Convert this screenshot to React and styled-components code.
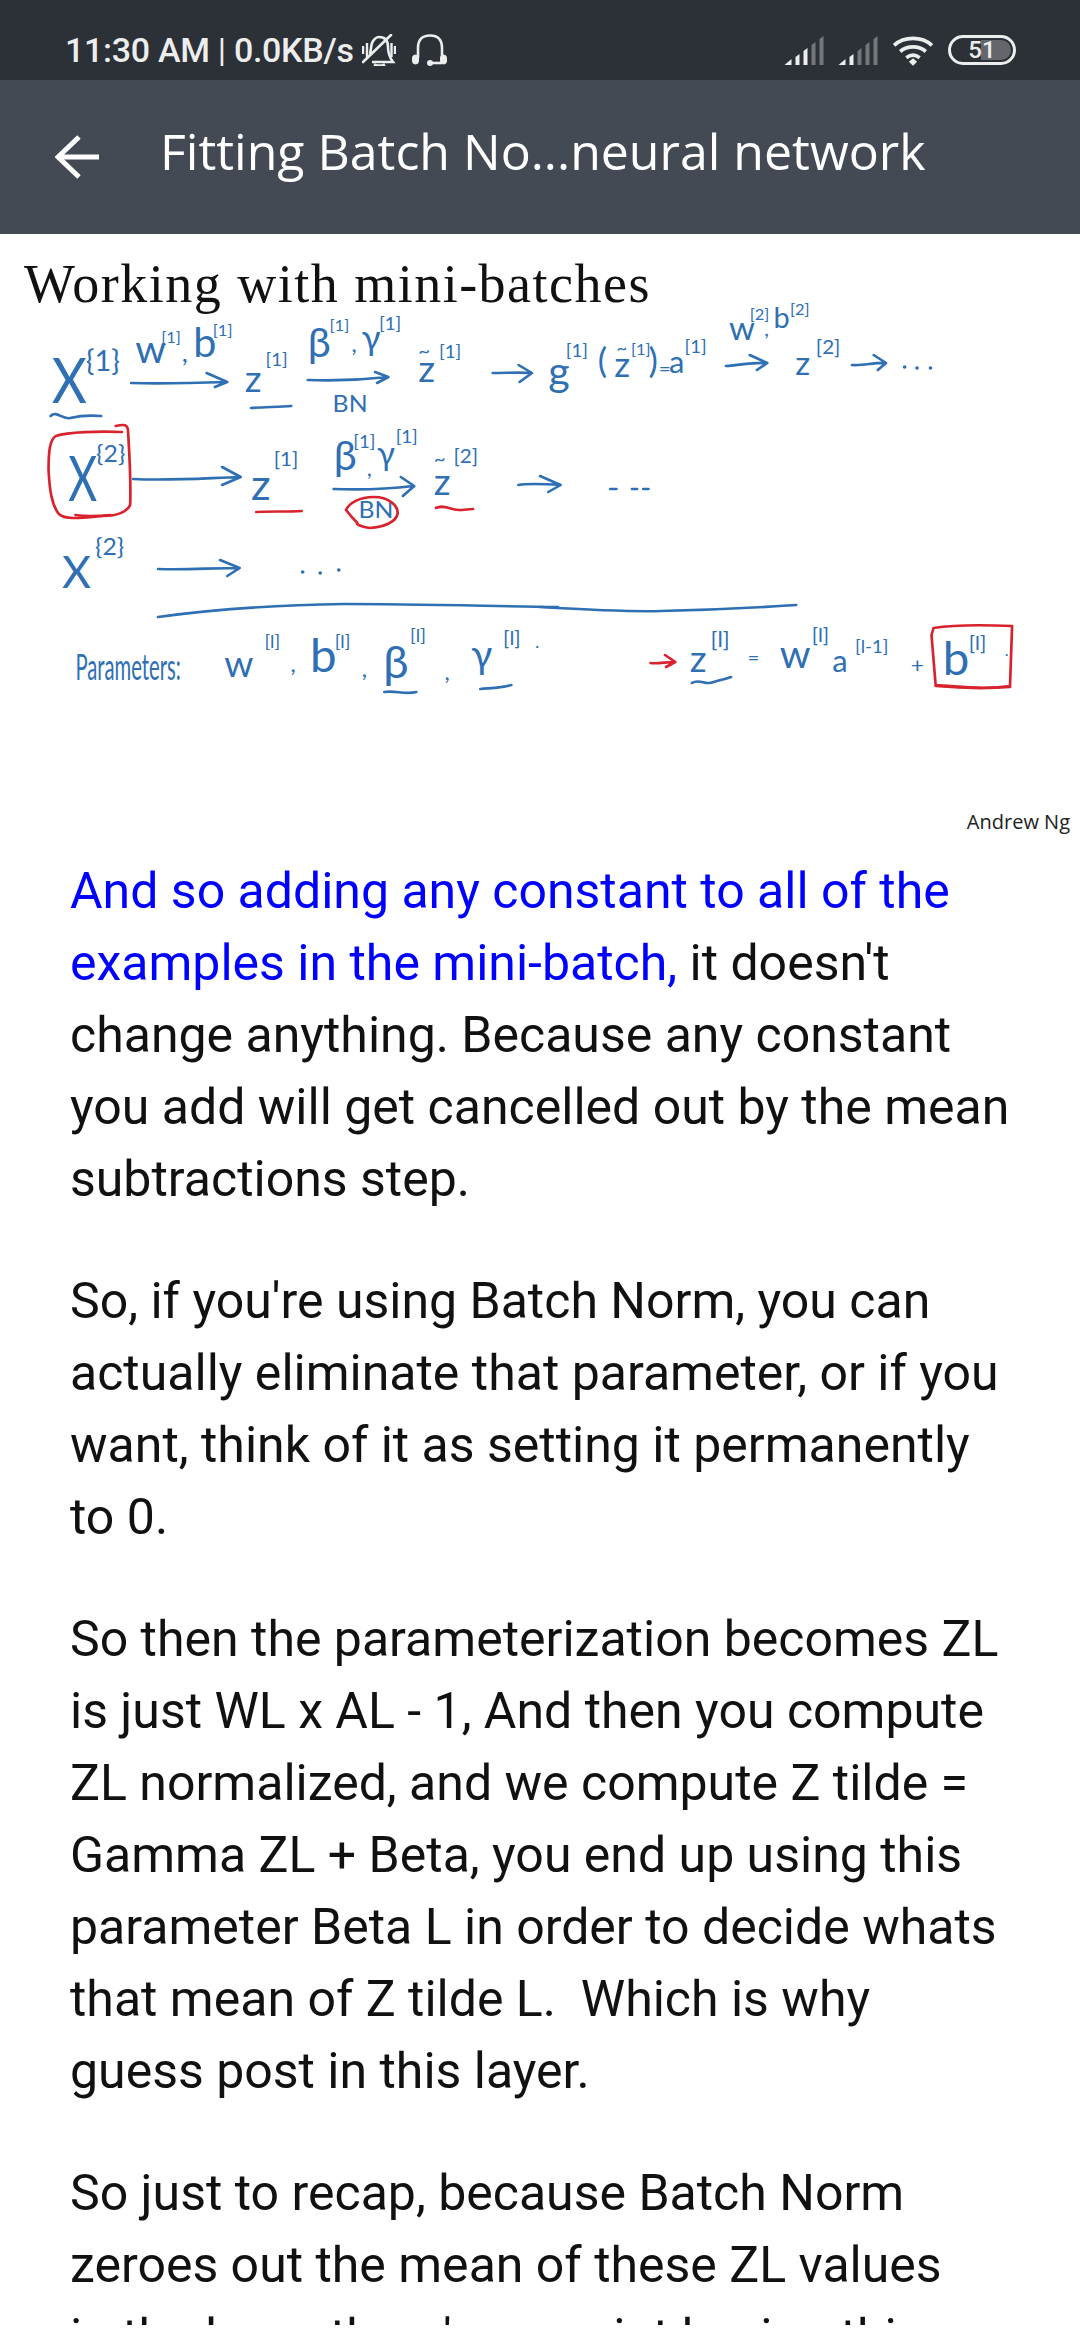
import React from 'react'
import styled, { createGlobalStyle } from 'styled-components'

const GlobalStyle = createGlobalStyle`
  html, body {
    margin: 0;
    padding: 0;
    height: 2340px;
    overflow: hidden;
    background: #fff;
  }
`

const BLUE = '#2f6fb3'
const RED = '#d8232f'
const SKETCH_SCALE_X = 1.033

// handwritten notes on the slide, one block per area of the board
// notes: [text, x, baseline y, size, squeezed width]
const boardAreas = [
  {
    origin: 0,
    notes: [
      ['X', 50, 403, 62, 34], ['{1}', 83, 371, 28], ['w', 131, 363, 38], ['[1]', 156, 343, 16], [',', 176, 362, 26],
      ['b', 187, 357, 40], ['[1]', 206, 336, 16], ['z', 237, 392, 36], ['[1]', 257, 366, 18], ['β', 298, 357, 40],
      ['[1]', 319, 331, 16], [',', 340, 352, 24], ['γ', 350, 350, 34], ['[1]', 367, 330, 18], ['BN', 322, 412, 24],
      ['z', 405, 382, 36], ['~', 405, 358, 20], ['[1]', 425, 358, 18],

      ['X', 66, 501, 62, 28], ['{2}', 93, 462, 24], ['z', 243, 500, 42], ['[1]', 265, 466, 20], ['β', 323, 470, 40],
      ['[1]', 342, 448, 18], [',', 355, 476, 22], ['γ', 365, 465, 32], ['[1]', 383, 443, 18], ['BN', 347, 518, 24],
      ['~', 420, 466, 20], ['z', 420, 495, 36], ['[2]', 439, 463, 20],

      ['X', 60, 588, 44, 28], ['{2}', 92, 555, 24],
      ['Parameters:', 73, 680, 36, 102], ['w', 217, 677, 36], ['[l]', 256, 648, 18], [',', 281, 672, 24],
      ['b', 300, 672, 46], ['[l]', 324, 648, 18], [',', 350, 677, 24], ['β', 371, 678, 44], ['[l]', 397, 642, 18],
      [',', 430, 680, 24], ['γ', 456, 668, 38], ['[l]', 487, 645, 20], ['.', 518, 648, 18],
    ],
    blue: [
      'M127 383 C160 384 190 383 220 382 M200 373 L220 382 L208 387',
      'M49 416 C55 410 60 420 68 418 C76 416 86 415 98 416',
      'M243 408 C255 407 270 407 282 406',
      'M298 380 C325 381 350 380 376 377 M363 372 L376 377 L365 383',
      'M477 373 C490 373 503 372 515 373 M502 365 L515 373 L503 382',
      'M129 479 C165 481 200 478 233 477 M215 467 L233 477 L215 485',
      'M323 489 C350 490 376 489 400 486 M388 477 L401 486 L390 496',
      'M153 569 C180 570 205 568 232 568 M213 560 L232 568 L220 576',
      'M153 617 C210 609 270 605 333 604 C400 604 470 606 540 607',
      'M372 692 C382 690 392 695 403 692',
      'M465 689 C475 688 485 688 495 685',
    ],
    red: [
      'M118 432 C95 431 66 432 54 436 C48 440 47 452 47 470 C48 490 50 505 57 514 C63 520 78 518 100 516 C113 516 123 512 126 505 C127 480 125 450 124 432 C124 424 120 424 112 426',
      'M73 515 C85 517 97 516 107 515',
      'M248 512 C262 511 278 512 292 511',
      'M335 510 C338 503 348 497 362 497 C376 497 385 505 385 513 C384 522 372 527 358 528 C350 527 344 524 346 523 C341 518 338 514 335 510',
      'M422 508 C430 504 436 510 444 510 C449 510 454 509 458 509',
    ],
    dots: [[293, 572], [310, 573], [328, 570]],
  },
  {
    origin: 540,
    notes: [
      ['g', 548, 386, 40], ['[1]', 565, 357, 18], ['(', 596, 373, 34], ['z', 612, 377, 34], ['~', 614, 354, 18],
      ['[1]', 628, 355, 16], [')', 645, 373, 34], ['=', 655, 376, 20], ['a', 665, 373, 30], ['[1]', 680, 353, 18],
      ['w', 723, 340, 32], ['[2]', 743, 320, 16], [',', 757, 336, 20], ['b', 766, 328, 28], ['[2]', 782, 315, 16],
      ['z', 787, 375, 32], ['[2]', 807, 354, 20],

      ['z', 685, 672, 36], ['[l]', 705, 647, 22], ['=', 741, 665, 20], ['w', 772, 668, 38], ['[l]', 803, 642, 20],
      ['a', 823, 672, 30], ['[l-1]', 845, 653, 18], ['+', 899, 673, 22], ['b', 930, 675, 46], ['[l]', 955, 650, 20],
      ['.', 990, 656, 16],
    ],
    blue: [
      'M720 366 C733 365 747 362 760 363 M743 355 L760 363 L750 370',
      'M842 365 C853 366 864 362 875 363 M863 355 L875 363 L867 370',
      'M519 485 C530 483 545 484 560 485 M540 476 L560 485 L548 492',
      'M608 489 H614 M629 489 H634 M640 489 H645',
      'M540 607 C590 610 625 612 657 611 C700 610 745 608 788 605',
      'M687 683 C695 678 700 686 708 682 C714 680 720 679 725 677',
    ],
    red: [
      'M647 663 C654 664 662 662 670 662 M661 655 L671 662 L662 667',
      'M921 628 C945 624 975 625 997 626 L995 686 C970 690 945 686 923 685 L919 635 L921 628',
      'M923 686 C945 688 970 689 995 687',
    ],
    dots: [[893, 367], [905, 368], [918, 368]],
  },
]

const Page = styled.div`
  width: 1080px;
  height: 2340px;
  background: #fff;
`

// the webview stops a little above the bottom edge of the screen
const Reader = styled.div`
  height: 2325px;
  overflow: hidden;
`

const StatusBar = styled.div`
  height: 80px;
  padding: 20px 64px 0 65px;
  box-sizing: border-box;
  display: flex;
  align-items: center;
  background: #2c3037;
  color: #eceded;
`

const Clock = styled.span`
  font: 500 34px Roboto, sans-serif;
  letter-spacing: -0.3px;
  white-space: nowrap;
`

const Thin = styled.span`
  font-weight: 400;
`

const StatusIcons = styled.div`
  display: flex;
  align-items: center;
  margin-left: 8px;
  gap: ${({ $gap }) => $gap || 16}px;
`

const Spacer = styled.div`
  flex: 1;
`

const Battery = styled.div`
  position: relative;
  width: 68px;
  height: 30px;
  box-sizing: border-box;
  border: 3px solid #eceded;
  border-radius: 15px;
  display: flex;
  align-items: center;
  justify-content: center;
  font: 500 24px Roboto, sans-serif;
  color: #eceded;
  overflow: hidden;
`

const BatteryFill = styled.div`
  position: absolute;
  top: 2px;
  bottom: 2px;
  right: 2px;
  width: 30px;
  border-radius: 0 11px 11px 0;
  background: #63666b;
`

const BatteryText = styled.span`
  position: relative;
`

const AppBar = styled.header`
  height: 154px;
  padding-left: 55px;
  box-sizing: border-box;
  display: flex;
  align-items: center;
  background: #444a54;
  color: #fff;
`

const Title = styled.h1`
  margin: 0 0 12px 61px;
  font: 400 50px "Open Sans", sans-serif;
  white-space: nowrap;
`

const Slide = styled.figure`
  margin: 0;
  padding-top: 22px;
  display: flex;
  flex-direction: column;
`

const SlideTitle = styled.div`
  padding-left: 24px;
  font: 400 54px/56px "Liberation Serif", serif;
  letter-spacing: 1.5px;
  color: #111;
  white-space: nowrap;
`

const Sketch = styled.svg`
  display: block;
  width: 1080px;
  height: 519px;
  margin-top: -22px;
  fill: none;
  stroke-linecap: round;
  stroke-linejoin: round;
`

const Ink = styled.path`
  stroke: ${({ $color }) => $color};
  stroke-width: 2.6;
  fill: none;
`

const Note = styled.text`
  font-family: Lato, "Open Sans", sans-serif;
  font-weight: 400;
  fill: ${BLUE};
  stroke: none;
`

const Credit = styled.figcaption`
  padding-right: 10px;
  text-align: right;
  font: 400 20px/26px "Open Sans", sans-serif;
  color: #222;
`

const Article = styled.article`
  padding: 20px 60px 0 70px;
`

const Paragraph = styled.p`
  margin: 0 0 50px;
  font: 400 50px/72px Roboto, sans-serif;
  color: #111;
`

const Highlight = styled.span`
  color: #0000ff;
`

const BellOff = () => (
  <svg width="34" height="32" viewBox="0 0 34 32" fill="none" stroke="#eceded" strokeWidth="2.6">
    <path d="M8 20 C9 16 9 12 10 9 C12 5 14 3 17 3 C24 3 26 8 26 13 C26 20 28 24 31 28 H10" />
    <path d="M12 30.5 C15 32 20 32 23 30.5" strokeWidth="3" />
    <path d="M1 28 L29 1" strokeLinecap="round" />
    <path d="M1 12 V20 M5 9 V23 M29.5 9 V23 M33 12 V20" strokeWidth="2.4" />
  </svg>
)

const Headset = () => (
  <svg width="35" height="32" viewBox="0 0 35 32" fill="none" stroke="#eceded" strokeWidth="2.6">
    <path d="M6 24 V14 C6 6 10 1.5 18 1.5 C26 1.5 30 6 30 14 V24" />
    <rect x="0.5" y="21" width="6" height="9" rx="3" fill="#eceded" strokeWidth="1" />
    <rect x="28.5" y="21" width="6" height="9" rx="3" fill="#eceded" strokeWidth="1" />
    <path d="M18 29 H30" />
    <circle cx="18" cy="29" r="3" fill="#eceded" stroke="none" />
  </svg>
)

const Signal = ({ active }) => (
  <svg width="40" height="30" viewBox="0 0 39 30">
    {[0, 1, 2, 3, 4].map((i) => (
      <path
        key={i}
        d={i === 0 ? 'M0 30 L7 24 V30 Z' : `M${i * 8 + 3} 30 V${22 - (i - 1) * 6} L${i * 8 + 7} ${19 - (i - 1) * 6} V30 Z`}
        fill={i < active ? '#eceded' : '#73767a'}
      />
    ))}
  </svg>
)

const Wifi = () => (
  <svg width="42" height="31" viewBox="0 0 41 30" fill="none" stroke="#eceded" strokeWidth="3.6">
    <path d="M2 10 C12 1 29 1 39 10" />
    <path d="M8 16 C15 10 26 10 33 16" />
    <path d="M14 22 C18 19 23 19 27 22" />
    <path d="M16.5 26 L20.5 22.5 L24.5 26 L20.5 30 Z" fill="#eceded" stroke="none" />
  </svg>
)

const BackArrow = () => (
  <svg width="44" height="44" viewBox="0 0 44 44" fill="none" stroke="#fff" strokeWidth="5">
    <path d="M44 22 H4" />
    <path d="M24 2 L3 22 L24 42" />
  </svg>
)

export default function App() {
  return (
    <Page>
      <GlobalStyle />
      <Reader>
        <StatusBar>
          <Clock>
            11:30 AM <Thin>|</Thin> 0.0KB/s
          </Clock>
          <StatusIcons>
            <BellOff />
            <Headset />
          </StatusIcons>
          <Spacer />
          <StatusIcons $gap={14}>
            <Signal active={3} />
            <Signal active={2} />
            <Wifi />
            <Battery>
              <BatteryFill />
              <BatteryText>51</BatteryText>
            </Battery>
          </StatusIcons>
        </StatusBar>

        <AppBar>
          <BackArrow />
          <Title>Fitting Batch No...neural network</Title>
        </AppBar>

        <Slide>
          <SlideTitle>Working with mini-batches</SlideTitle>
          <Sketch viewBox="0 290 1080 519">
            {boardAreas.map(({ origin, notes, blue, red, dots }) => (
              <g key={origin} transform={`translate(${origin} 0) scale(${SKETCH_SCALE_X} 1) translate(${-origin} 0)`}>
                {notes.map(([text, x, y, size, squeezed], i) => (
                  <Note
                    key={i}
                    x={x}
                    y={y}
                    fontSize={size}
                    textLength={squeezed}
                    lengthAdjust={squeezed ? 'spacingAndGlyphs' : undefined}
                  >
                    {text}
                  </Note>
                ))}
                {blue.map((d) => (
                  <Ink key={d} d={d} $color={BLUE} />
                ))}
                {red.map((d) => (
                  <Ink key={d} d={d} $color={RED} />
                ))}
                {dots.map(([cx, cy]) => (
                  <circle key={cx} cx={cx} cy={cy} r="1.8" fill={BLUE} />
                ))}
              </g>
            ))}
          </Sketch>
          <Credit>Andrew Ng</Credit>
        </Slide>

        <Article>
          <Paragraph>
            <Highlight>And so adding any constant to all of the examples in the mini-batch,</Highlight> it doesn't
            change anything. Because any constant you add will get cancelled out by the mean subtractions step.
          </Paragraph>
          <Paragraph>
            So, if you're using Batch Norm, you can actually eliminate that parameter, or if you want, think of it as
            setting it permanently to 0.
          </Paragraph>
          <Paragraph>
            So then the parameterization becomes ZL is just WL x AL - 1, And then you compute ZL normalized, and we
            compute Z tilde = Gamma ZL + Beta, you end up using this parameter Beta L in order to decide whats that
            mean of Z tilde L.&nbsp; Which is why
            <br />
            guess post in this layer.
          </Paragraph>
          <Paragraph>
            So just to recap, because Batch Norm zeroes out the mean of these ZL values
            <br />
            in the layer, there's no point having this
          </Paragraph>
        </Article>
      </Reader>
    </Page>
  )
}
